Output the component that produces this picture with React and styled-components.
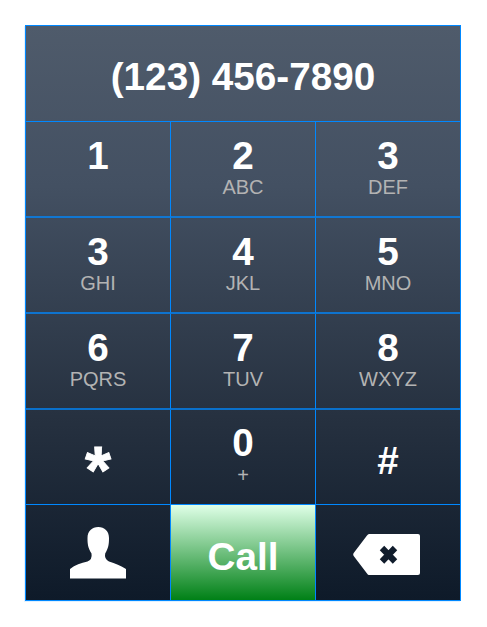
import React from 'react';
import styled, { createGlobalStyle } from 'styled-components';

const GlobalStyle = createGlobalStyle`
  *, *::before, *::after { box-sizing: border-box; }
  body { margin: 0; background: #fff; font-family: "Liberation Sans", Arial, sans-serif; }
`;

const Page = styled.main`
  width: 487px;
  height: 627px;
  padding: 25px;
`;

const Phone = styled.div`
  width: 436px;
  height: 576px;
  display: grid;
  grid-template-columns: 145px 145px 144px;
  grid-template-rows: repeat(4, 96px) 95px 95px;
  border: 1px solid #0088ff;
  background: linear-gradient(#4f5b6b, #435062 28%, #263140 68%, #0e1a29);
  box-shadow: -1px 1px 0 rgba(0, 136, 255, 0.12);
`;

const Display = styled.div`
  grid-column: 1 / -1;
  border-bottom: 1px solid #0088ff;
  padding-top: 29px;
  text-align: center;
  color: #fff;
  font-weight: bold;
  font-size: 38.7px;
  line-height: 44px;
`;

const Key = styled.button`
  appearance: none;
  margin: 0;
  padding: ${({ $top }) => $top ?? 12}px 0 0;
  border: 0 solid #0088ff;
  border-right-width: ${({ $last }) => ($last ? 0 : 1)}px;
  border-bottom-width: ${({ $bottom }) => ($bottom ? 0 : 1)}px;
  background: ${({ $call }) => ($call ? 'linear-gradient(#dfffe7, #008016)' : 'transparent')};
  display: flex;
  flex-direction: column;
  align-items: center;
  color: #fff;
  font-family: inherit;
`;

const NumberKey = styled(Key)`
  border-bottom: 2px solid rgba(0, 136, 255, 0.72);
`;

const Digit = styled.span`
  font-size: ${({ $size }) => $size ?? 38.7}px;
  line-height: 44px;
  font-weight: bold;
`;

const Star = styled(Digit)`
  -webkit-text-stroke: 0.8px #fff;
`;

const Letters = styled.span`
  margin-top: ${({ $gap }) => $gap ?? -1}px;
  font-size: 20px;
  line-height: 20px;
  color: #b3b3b3;
`;

const Icon = styled.svg`
  display: block;
  fill: #fff;
`;

const keys = [
  ['1', ''], ['2', 'ABC'], ['3', 'DEF'],
  ['3', 'GHI'], ['4', 'JKL'], ['5', 'MNO'],
  ['6', 'PQRS'], ['7', 'TUV'], ['8', 'WXYZ'],
];

function ContactIcon() {
  return (
    <Icon width="56" height="52" viewBox="0 0 56 52">
      <path d="M0 51.5V42C5 38 11 36 17.500 34.500Q22.500 32.500 21.500 26.500C18 21 17.500 17 17.500 11C17.500 4 22 0 28.250 0S39 4 39 11C39 17 38.500 21 35.200 26.500Q34 32 39 34.500C45 36 51 39 56 42V51.500Z" />
    </Icon>
  );
}

function DeleteIcon() {
  return (
    <Icon width="68" height="41" viewBox="0 0 68 41">
      <path d="M16 0H65Q67 0 67 2V39Q67 41 65 41H16Q15 41 14 39.500L.7 22Q-.3 20.500 .7 19L14 1.500Q15 0 16 0Z" />
      <path d="M29 14L42 27.500M42 14L29 27.500" stroke="#101c2c" strokeWidth="6.200" />
    </Icon>
  );
}

const DeleteKey = styled(Key)`
  padding-right: 2px;
`;

export default function App() {
  return (
    <>
      <GlobalStyle />
      <Page>
        <Phone>
          <Display>(123) 456-7890</Display>
          {keys.map(([digit, letters], i) => (
            <NumberKey key={i} $last={i % 3 === 2}>
              <Digit>{digit}</Digit>
              <Letters>{letters}</Letters>
            </NumberKey>
          ))}
          <Key $top={38}><Star $size={67}>*</Star></Key>
          <Key $top={11}><Digit>0</Digit><Letters $gap={0}>+</Letters></Key>
          <Key $last $top={29}><Digit>#</Digit></Key>
          <Key $bottom $top={22}><ContactIcon /></Key>
          <Key $bottom $call $top={30}><Digit>Call</Digit></Key>
          <DeleteKey $bottom $last $top={29}><DeleteIcon /></DeleteKey>
        </Phone>
      </Page>
    </>
  );
}
